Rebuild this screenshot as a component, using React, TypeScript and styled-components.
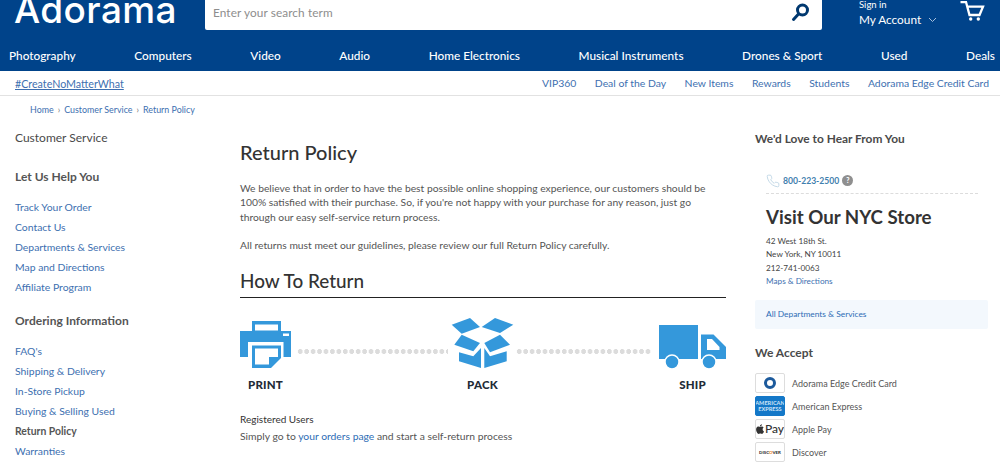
import React from "react";
import styled, { createGlobalStyle } from "styled-components";

const Global = createGlobalStyle`
  html, body { margin: 0; padding: 0; background: #fff; }
  body { font-family: Lato, "Liberation Sans", sans-serif; color: #444; }
  * { box-sizing: border-box; }
  a { text-decoration: none; color: inherit; }
`;

const Page = styled.div`
  width: 1000px;
  height: 463px;
  overflow: hidden;
`;

const Header = styled.header`
  background: #00438a;
  color: #fff;
`;

const TopRow = styled.div`
  display: flex;
  height: 30px;
`;

const LogoWrap = styled.div`
  width: 205px;
  padding-left: 14px;
  overflow: hidden;
`;

const Logo = styled.span`
  display: block;
  font-family: Inter, Lato, sans-serif;
  font-size: 37px;
  font-weight: 500;
  line-height: 37px;
  margin-top: -9px;
  letter-spacing: 0.4px;
  color: #fff;
`;

const Search = styled.div`
  width: 617px;
  background: #fff;
  display: flex;
  align-items: center;
  padding: 0 12px 6px 8px;
  border-radius: 0 0 2px 2px;
`;

const SearchInput = styled.input`
  flex: 1;
  border: 0;
  outline: 0;
  font: 11.8px Lato, sans-serif;
  letter-spacing: 0.1px;
  padding: 0;
  &::placeholder { color: #8d8d8d; opacity: 1; }
`;

const Account = styled.div`
  width: 138px;
  padding-left: 37px;
  flex-shrink: 0;
`;

const SignIn = styled.div`
  font-size: 9.5px;
  line-height: 10px;
`;

const MyAccount = styled.div`
  font-size: 11.8px;
  line-height: 14px;
  margin-top: 3px;
  display: flex;
  align-items: center;
  gap: 7px;
  white-space: nowrap;
`;

const CartBox = styled.div`
  padding-top: 1px;
`;

const Nav = styled.nav`
  height: 41px;
  display: flex;
  justify-content: space-between;
  align-items: center;
  padding: 9px 5px 0 9px;
  font-size: 11.8px;
  font-weight: 500;
`;

const SubNav = styled.div`
  height: 25px;
  display: flex;
  justify-content: space-between;
  align-items: center;
  padding: 0 11px 0 15px;
  border-bottom: 1px solid #e2e2e2;
  color: #3d6fb0;
  font-size: 10.4px;
`;

const Hash = styled.a`
  text-decoration: underline;
  font-size: 10.7px;
`;

const SubLinks = styled.div`
  display: flex;
  gap: 18.5px;
`;

const Crumbs = styled.div`
  padding: 8px 0 0 30px;
  height: 27px;
  font-size: 8.9px;
  line-height: 12px;
  color: #3d6fb0;
  display: flex;
  gap: 4px;
`;

const CrumbSep = styled.span`
  color: #777;
`;

const Columns = styled.div`
  display: grid;
  grid-template-columns: 196px 486px 233px;
  column-gap: 29px;
  padding-left: 15px;
`;

const SideTitle = styled.div`
  font-size: 12px;
  line-height: 16px;
  margin-top: 7px;
  color: #4a4a4a;
`;

const SideHead = styled.div`
  font-size: 12px;
  font-weight: 700;
  line-height: 16px;
  color: #555;
  margin-top: ${p => p.$top}px;
  margin-bottom: 12px;
`;

const SideLink = styled.a`
  display: block;
  font-size: 10.4px;
  line-height: 20px;
  color: ${p => (p.$active ? "#555" : "#3d6fb0")};
  font-weight: ${p => (p.$active ? 700 : 400)};
`;

const Title = styled.h1`
  font-size: 20px;
  font-weight: 500;
  line-height: 24px;
  color: #333;
  margin: 17px 0 17px;
`;

const Para = styled.p`
  font-size: 10.3px;
  line-height: 14.4px;
  color: #555;
  margin: 0 0 14px;
`;

const SubTitle = styled.h2`
  font-size: 18.9px;
  font-weight: 500;
  line-height: 24px;
  color: #333;
  margin: 16px 0 0;
  padding-bottom: 4px;
  border-bottom: 1.5px solid #222;
`;

const Steps = styled.div`
  display: flex;
  align-items: flex-start;
  margin-top: 21px;
`;

const Step = styled.div`
  display: flex;
  flex-direction: column;
  align-items: center;
  width: ${p => p.$w}px;
  flex-shrink: 0;
`;

const IconSlot = styled.div`
  height: 50px;
  display: flex;
  align-items: flex-end;
`;

const StepLabel = styled.div`
  font-size: 11.5px;
  font-weight: 900;
  line-height: 14px;
  color: #222b36;
  margin-top: 9px;
  letter-spacing: 0.2px;
`;

const Dots = styled.div`
  width: ${p => p.$w}px;
  flex-shrink: 0;
  height: 5px;
  margin: 30px ${p => p.$mr}px 0 ${p => p.$ml}px;
  background-image: radial-gradient(circle, #dcdcdc 2.3px, transparent 2.6px);
  background-size: 6.45px 5px;
`;

const Registered = styled.div`
  font-size: 10px;
  line-height: 14px;
  color: #333;
  margin-top: 20px;
`;

const SelfReturn = styled.div`
  font-size: 10.33px;
  line-height: 14px;
  margin-top: 3px;
  color: #555;
`;

const InlineLink = styled.a`
  color: #2d6cb5;
`;

const RightHead = styled.div`
  font-size: ${p => p.$size}px;
  font-weight: 700;
  line-height: 16px;
  color: #4a4a4a;
  margin-top: ${p => p.$top}px;
`;

const Store = styled.div`
  margin: 24px 10px 0 11px;
`;

const PhoneRow = styled.div`
  display: flex;
  align-items: center;
  padding-bottom: 3px;
  height: 23px;
  border-bottom: 1px dashed #dcdcdc;
  font-size: 8.6px;
  font-weight: 700;
  color: #3f7fae;
`;

const PhoneText = styled.span`
  margin-left: 3px;
`;

const Help = styled.span`
  width: 11px;
  height: 11px;
  border-radius: 50%;
  background: #8f8f8f;
  color: #fff;
  font-size: 7px;
  font-weight: 900;
  text-align: center;
  line-height: 11px;
  margin-left: 3px;
`;

const StoreTitle = styled.div`
  font-size: 18.7px;
  font-weight: 700;
  line-height: 24px;
  color: #333;
  margin-top: 11px;
  white-space: nowrap;
`;

const Address = styled.div`
  font-size: 8.2px;
  line-height: 13.4px;
  color: #444;
  margin-top: 6px;
`;

const MapLink = styled.a`
  display: block;
  color: #3d6fb0;
`;

const AllDepts = styled.div`
  height: 29px;
  margin-top: 11px;
  padding-left: 11px;
  background: #f3f8fd;
  font-size: 8.4px;
  line-height: 29px;
  color: #2d6cb5;
  border-radius: 2px;
`;

const PayRow = styled.div`
  display: flex;
  align-items: center;
  gap: 7px;
  height: 23px;
  font-size: 9px;
  color: #555;
`;

const PayList = styled.div`
  margin-top: 11px;
`;

const PayBox = styled.span`
  width: 30px;
  height: 20px;
  border: 1px solid ${p => p.$bg || "#ddd"};
  border-radius: 2px;
  background: ${p => p.$bg || "#fff"};
  display: flex;
  flex-direction: column;
  align-items: center;
  justify-content: center;
  flex-shrink: 0;
  overflow: hidden;
`;

const AmexText = styled.span`
  font-size: 5.6px;
  line-height: 6px;
  color: #cfe4f7;
  font-weight: 700;
  white-space: nowrap;
`;

const ApplePay = styled.span`
  display: flex;
  align-items: center;
  gap: 1px;
  font-size: 12px;
  font-weight: 500;
  color: #333;
  line-height: 12px;
`;

const DiscoverText = styled.span`
  font-size: 4.4px;
  font-weight: 900;
  color: #333;
`;

const Orange = styled.span`
  color: #f08a1d;
`;

const Ring = styled.span`
  width: 12px;
  height: 12px;
  border-radius: 50%;
  border: 3.500px solid #1c5a9c;
`;

const Chevron = () => (
  <svg width="9" height="6" viewBox="0 0 9 6" fill="none" stroke="#a8c0dc" strokeWidth="1">
    <path d="M1 1l3.500 3.500L8 1" />
  </svg>
);

const SearchIcon = () => (
  <svg width="19" height="19" viewBox="0 0 19 19" fill="none" stroke="#00386f" strokeWidth="3" strokeLinecap="round">
    <circle cx="11.500" cy="7" r="5" />
    <path d="M7.500 11L2.500 16.500" />
  </svg>
);

const CartIcon = () => (
  <svg width="26" height="22" viewBox="0 0 26 22" fill="none" stroke="#fff" strokeWidth="2.300">
    <path d="M0.500 1H6L9.500 14H19.500L23 5.700H7" />
    <circle cx="10.700" cy="18" r="1.700" fill="#fff" stroke="none" />
    <circle cx="18.300" cy="18" r="1.700" fill="#fff" stroke="none" />
  </svg>
);

const PhoneIcon = () => (
  <svg width="14" height="14" viewBox="0 0 24 24" fill="none" stroke="#b7d0e2" strokeWidth="1.400">
    <path d="M22 16.900v3a2 2 0 0 1-2.200 2 19.800 19.800 0 0 1-8.600-3.100 19.500 19.500 0 0 1-6-6A19.800 19.800 0 0 1 2.100 4.200 2 2 0 0 1 4.100 2h3a2 2 0 0 1 2 1.700c.1 1 .4 1.900.7 2.800a2 2 0 0 1-.5 2.100L8.100 9.900a16 16 0 0 0 6 6l1.300-1.300a2 2 0 0 1 2.100-.4c.9.3 1.800.6 2.800.7a2 2 0 0 1 1.700 2z" />
  </svg>
);

const PrinterIcon = () => (
  <svg width="51" height="48" viewBox="0 0 51 48">
    <path fill="#3498db" d="M12 0h29v10H51v26H0V10h12z" />
    <path fill="#fff" d="M15 3.500h23v6H15z" />
    <path fill="#fff" d="M43 12.500h6v2.500h-6z" />
    <path fill="#fff" d="M8 21h35.500v15H8z" />
    <path fill="#3498db" d="M12 24.500h29V37L31 47H12z" />
    <path fill="#fff" d="M15 27.500h23V36H29v7.500H15z" />
  </svg>
);

const BoxIcon = () => (
  <svg width="63" height="51" viewBox="0 0 63 51">
    <g fill="#3498db">
      <path d="M0.700 6.700L19 0l10 9-18.300 6.700z" />
      <path d="M30.700 9L44 0l18.300 6.700L49 15z" />
      <path d="M10.700 16.700L29 25l-6.700 8.300-19-6.600z" />
      <path d="M49 16.700l10 10-20 7.600-5.700-9.300z" />
      <path d="M8 34.300l14.300 4L30 30v20L8 43.300z" />
      <path d="M33.300 30L39 38.300l16.700-5v10L33.300 50z" />
    </g>
  </svg>
);

const TruckIcon = () => (
  <svg width="67" height="44" viewBox="0 0 67 44">
    <g fill="#3498db">
      <path d="M0 0h39v34H0z" />
      <path d="M42 9.500h12.500L67 22v12H42z" />
      <circle cx="13" cy="37" r="7" stroke="#fff" strokeWidth="1.500" />
      <circle cx="50" cy="37" r="7" stroke="#fff" strokeWidth="1.500" />
    </g>
    <path fill="#fff" d="M48 14h5l7.500 8v3H48z" />
  </svg>
);

const AppleGlyph = () => (
  <svg width="8" height="10" viewBox="0 0 14 17" fill="#333">
    <path d="M11.600 9c0-2 1.700-3 1.800-3-1-1.400-2.500-1.600-3-1.700-1.300-.1-2.500.8-3.200.8s-1.700-.8-2.800-.8C3 4.300 1.600 5.200.9 6.500c-1.500 2.600-.4 6.500 1.100 8.600.7 1 1.600 2.200 2.700 2.100 1.100 0 1.500-.7 2.800-.7s1.700.7 2.800.7c1.200 0 1.900-1 2.600-2.100.8-1.200 1.200-2.300 1.200-2.400-.1 0-2.500-.9-2.500-3.700zM9.500 2.900C10.100 2.200 10.500 1.200 10.400 0c-.9 0-2 .6-2.600 1.300-.6.600-1.100 1.700-1 2.700 1 .1 2-.5 2.700-1.100z" />
  </svg>
);

const navItems = ["Photography", "Computers", "Video", "Audio", "Home Electronics", "Musical Instruments", "Drones & Sport", "Used", "Deals"];
const subItems = ["VIP360", "Deal of the Day", "New Items", "Rewards", "Students", "Adorama Edge Credit Card"];
const help = ["Track Your Order", "Contact Us", "Departments & Services", "Map and Directions", "Affiliate Program"];
const ordering = ["FAQ's", "Shipping & Delivery", "In-Store Pickup", "Buying & Selling Used", "Return Policy", "Warranties"];

export default function App() {
  return (
    <Page>
      <Global />
      <Header>
        <TopRow>
          <LogoWrap><Logo>Adorama</Logo></LogoWrap>
          <Search>
            <SearchInput placeholder="Enter your search term" />
            <SearchIcon />
          </Search>
          <Account>
            <SignIn>Sign in</SignIn>
            <MyAccount>My Account <Chevron /></MyAccount>
          </Account>
          <CartBox><CartIcon /></CartBox>
        </TopRow>
        <Nav>
          {navItems.map(n => <a key={n}>{n}</a>)}
        </Nav>
      </Header>
      <SubNav>
        <Hash>#CreateNoMatterWhat</Hash>
        <SubLinks>
          {subItems.map(n => <a key={n}>{n}</a>)}
        </SubLinks>
      </SubNav>
      <Crumbs>
        <a>Home</a><CrumbSep>›</CrumbSep><a>Customer Service</a><CrumbSep>›</CrumbSep><a>Return Policy</a>
      </Crumbs>
      <Columns>
        <aside>
          <SideTitle>Customer Service</SideTitle>
          <SideHead $top={23}>Let Us Help You</SideHead>
          {help.map(n => <SideLink key={n}>{n}</SideLink>)}
          <SideHead $top={16}>Ordering Information</SideHead>
          {ordering.map(n => <SideLink key={n} $active={n === "Return Policy"}>{n}</SideLink>)}
        </aside>
        <main>
          <Title>Return Policy</Title>
          <Para>
            We believe that in order to have the best possible online shopping experience, our customers should be
            100% satisfied with their purchase. So, if you're not happy with your purchase for any reason, just go
            through our easy self-service return process.
          </Para>
          <Para>All returns must meet our guidelines, please review our full Return Policy carefully.</Para>
          <SubTitle>How To Return</SubTitle>
          <Steps>
            <Step $w={51}><IconSlot><PrinterIcon /></IconSlot><StepLabel>PRINT</StepLabel></Step>
            <Dots $w={151} $ml={6} $mr={3} />
            <Step $w={63}><IconSlot><BoxIcon /></IconSlot><StepLabel>PACK</StepLabel></Step>
            <Dots $w={136} $ml={2} $mr={7} />
            <Step $w={67}><IconSlot><TruckIcon /></IconSlot><StepLabel>SHIP</StepLabel></Step>
          </Steps>
          <Registered>Registered Users</Registered>
          <SelfReturn>Simply go to <InlineLink>your orders page</InlineLink> and start a self-return process</SelfReturn>
        </main>
        <aside>
          <RightHead $top={8} $size={11.9}>We'd Love to Hear From You</RightHead>
          <Store>
            <PhoneRow>
              <PhoneIcon />
              <PhoneText>800-223-2500</PhoneText>
              <Help>?</Help>
            </PhoneRow>
            <StoreTitle>Visit Our NYC Store</StoreTitle>
            <Address>
              42 West 18th St.<br />
              New York, NY 10011<br />
              212-741-0063
              <MapLink>Maps &amp; Directions</MapLink>
            </Address>
          </Store>
          <AllDepts>All Departments &amp; Services</AllDepts>
          <RightHead $top={16} $size={12}>We Accept</RightHead>
          <PayList>
            <PayRow><PayBox><Ring /></PayBox>Adorama Edge Credit Card</PayRow>
            <PayRow><PayBox $bg="#1478c8"><AmexText>AMERICAN</AmexText><AmexText>EXPRESS</AmexText></PayBox>American Express</PayRow>
            <PayRow><PayBox><ApplePay><AppleGlyph />Pay</ApplePay></PayBox>Apple Pay</PayRow>
            <PayRow><PayBox><DiscoverText>DISC<Orange>O</Orange>VER</DiscoverText></PayBox>Discover</PayRow>
          </PayList>
        </aside>
      </Columns>
    </Page>
  );
}
